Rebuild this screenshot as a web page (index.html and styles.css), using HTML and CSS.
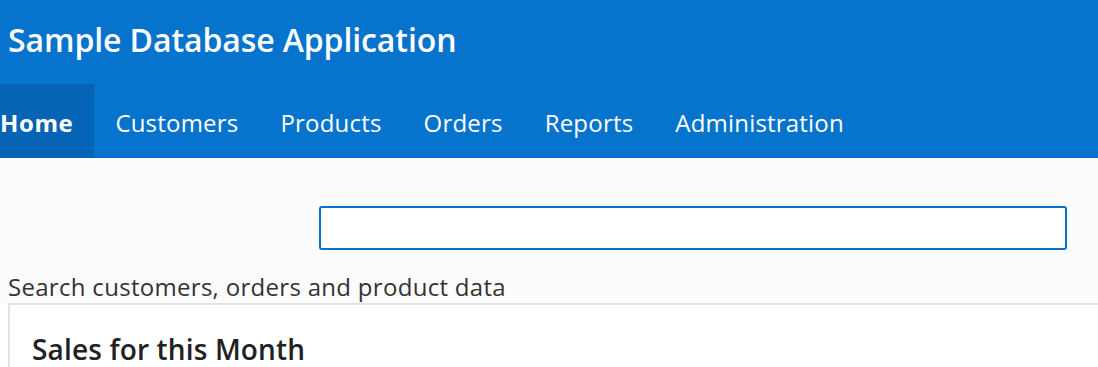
FILE: index.html
```html
<!DOCTYPE html>
<html lang="en">
<head>
  <meta charset="UTF-8">
  <title>Sample Database Application</title>
  <link rel="stylesheet" href="styles.css">
</head>
<body>

  <div class="header">
    <h1 class="app-title">Sample Database Application</h1>
  </div>

  <ul class="nav">
    <li class="nav-item active">Home</li>
    <li class="nav-item">Customers</li>
    <li class="nav-item">Products</li>
    <li class="nav-item">Orders</li>
    <li class="nav-item">Reports</li>
    <li class="nav-item">Administration</li>
  </ul>

  <div class="search-area">
    <div class="search-row">
      <input type="text" class="search-input">
    </div>
    <p class="search-hint">Search customers, orders and product data</p>
  </div>

  <div class="card">
    <h2 class="card-title">Sales for this Month</h2>
  </div>

</body>
</html>
```

FILE: styles.css
```css
body {
  margin: 0;
  font-family: "Open Sans", sans-serif;
  background: #fff;
  color: #333;
  overflow: hidden;
}
.header {
  background: #0673cd;
  height: 84px;
  padding: 0 8px;
  box-sizing: border-box;
}
.app-title {
  margin: 0;
  color: #fff;
  font-size: 32px;
  font-weight: 600;
  line-height: 79px;
  letter-spacing: -0.1px;
}
.nav {
  list-style: none;
  margin: 0;
  padding: 0;
  display: flex;
  background: #0673cd;
  height: 74px;
}
.nav-item {
  color: #fff;
  font-size: 24px;
  line-height: 78px;
  padding: 0 21px;
  letter-spacing: 0.2px;
}
.nav-item.active {
  background: #0564b6;
  font-weight: 700;
  padding-left: 0;
  padding-right: 21px;
  letter-spacing: 0.6px;
}
.search-area {
  background: #fcfcfc;
  padding-top: 47px;
  border-top: 1px solid #fff;
}
.search-row {
  padding-left: 319px;
}
.search-input {
  display: block;
  width: 748px;
  height: 44px;
  box-sizing: border-box;
  border: 2px solid #0673cd;
  border-radius: 3px;
  background: #fff;
  margin: 0;
}
.search-hint {
  margin: 20px 0 0 0;
  padding-left: 8px;
  font-size: 24px;
  line-height: 33px;
  letter-spacing: 0.3px;
  color: #333;
}
.card {
  margin-left: 8px;
  border: 2px solid #e3e3e3;
  border-right: none;
  background: #fff;
  padding: 25px 22px;
  height: 200px;
}
.card-title {
  margin: 0;
  font-size: 28px;
  font-weight: 600;
  color: #222;
  letter-spacing: 0.15px;
}
```
